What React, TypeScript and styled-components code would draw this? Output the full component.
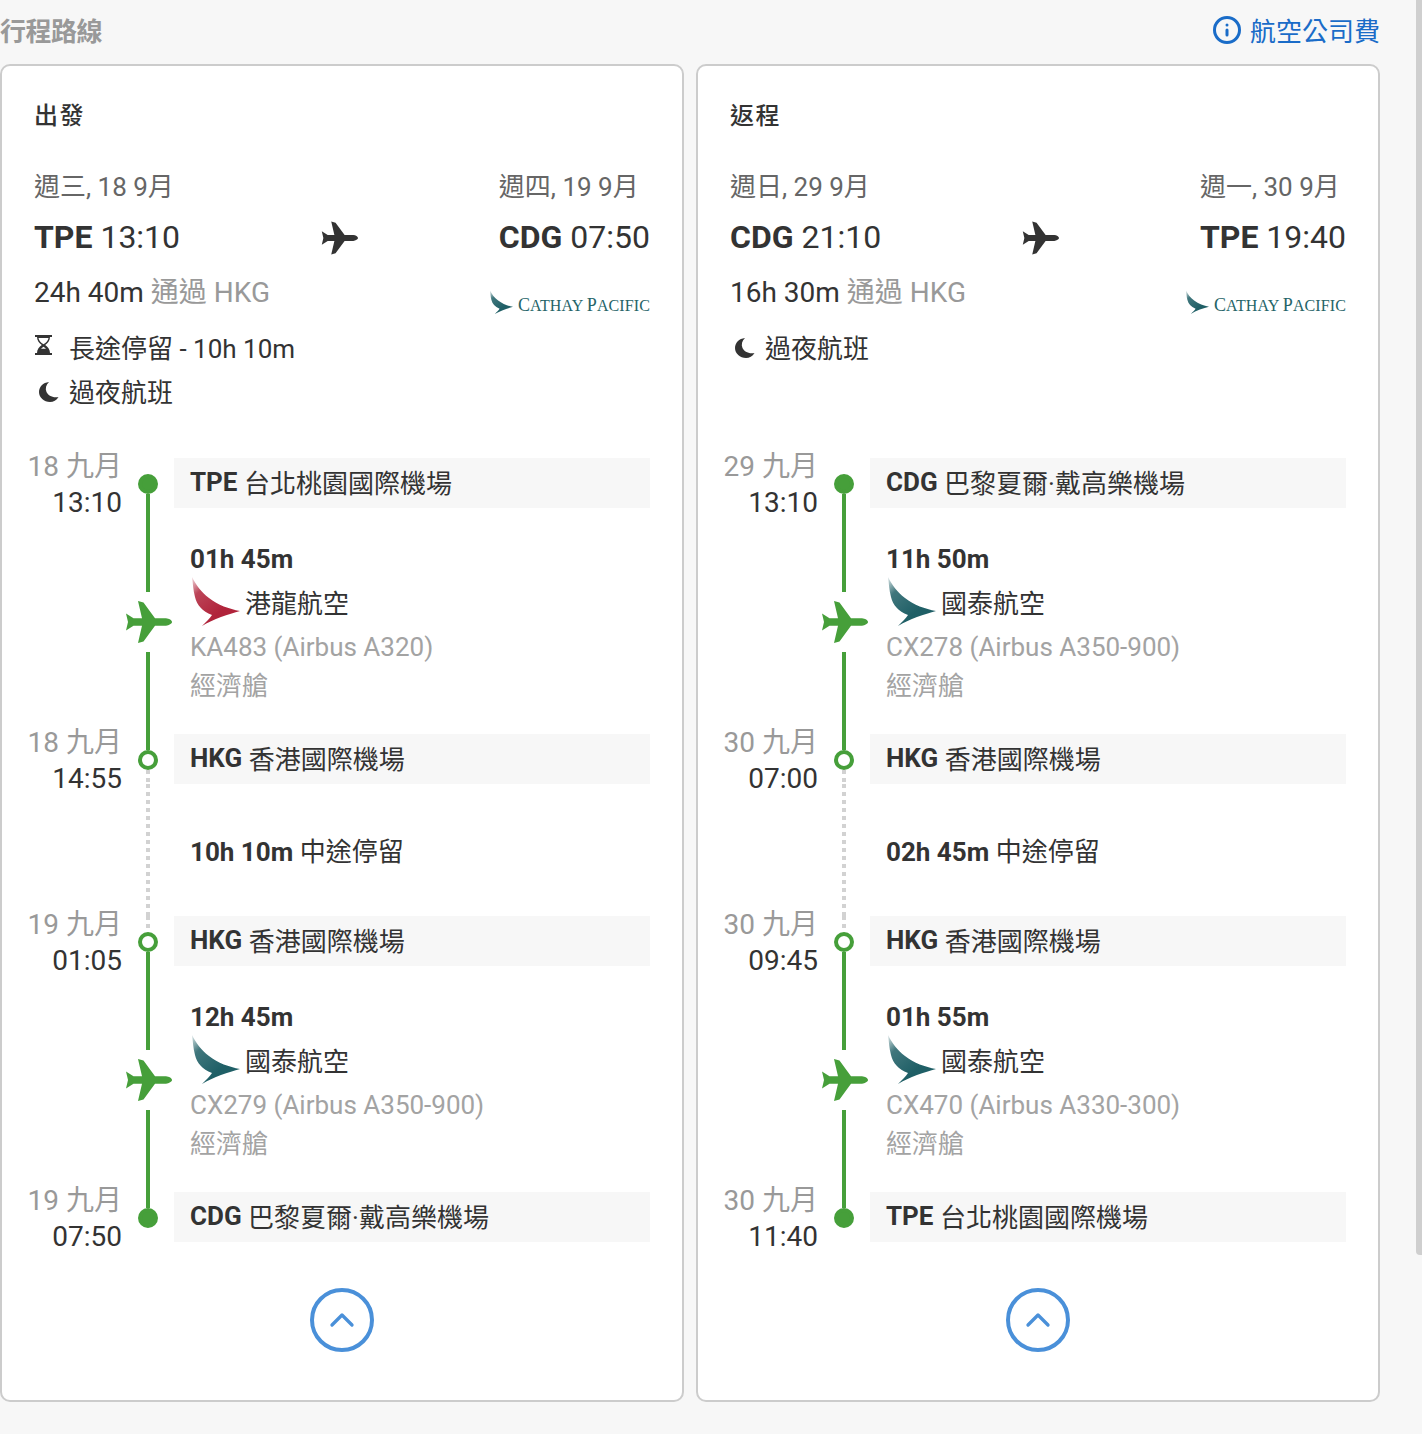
import React from "react";
import styled, { createGlobalStyle } from "styled-components";
import { Info, ChevronUp } from "lucide-react";

const GlobalStyle = createGlobalStyle`
  html, body {
    margin: 0;
    padding: 0;
    background: #f7f7f7;
  }
  body {
    font-family: Roboto, "Noto Sans CJK TC", sans-serif;
    color: #333;
  }
`;

const Page = styled.div`
  width: 1380px;
  height: 1434px;
`;

const ScrollThumb = styled.div`
  position: fixed;
  top: 0;
  right: 0;
  width: 6px;
  height: 1255px;
  background: #cfcfcf;
  border-bottom-left-radius: 4px;
`;

const TopBar = styled.div`
  height: 64px;
  display: flex;
  justify-content: space-between;
  align-items: center;
  padding-bottom: 6px;
  box-sizing: border-box;
`;

const SectionTitle = styled.div`
  font-size: 26px;
  font-weight: 700;
  letter-spacing: -0.5px;
  color: #999;
`;

const FeeLink = styled.a`
  display: flex;
  align-items: center;
  gap: 8px;
  font-size: 26px;
  color: #1a6cc8;
  svg {
    width: 30px;
    height: 30px;
    margin-top: 2px;
  }
`;

const Cards = styled.div`
  display: grid;
  grid-template-columns: 684px 684px;
  gap: 12px;
`;

const Card = styled.section`
  height: 1338px;
  box-sizing: border-box;
  background: #fff;
  border: 2px solid #ccc;
  border-radius: 10px;
  padding: 32px 32px 0;
`;

const CardTitle = styled.h2`
  margin: 0 0 34px;
  font-size: 24px;
  line-height: 36px;
  font-weight: 500;
  letter-spacing: 1.4px;
  color: #333;
`;

const RouteRow = styled.div`
  display: flex;
  justify-content: space-between;
`;

const DateLabel = styled.div`
  font-size: 26px;
  line-height: 38px;
  color: #666;
`;

const TimeLabel = styled.div`
  font-size: 32px;
  line-height: 42px;
  margin-top: 10px;
  color: #333;
  b {
    font-weight: 700;
  }
`;

const PlaneHolder = styled.div`
  align-self: flex-end;
  display: flex;
  color: #333;
  margin-bottom: 3px;
  svg {
    width: 37px;
    height: 34px;
  }
`;

const DurationRow = styled.div`
  display: flex;
  justify-content: space-between;
  align-items: center;
  margin-top: 13px;
  height: 44px;
`;

const Duration = styled.div`
  font-size: 28px;
  line-height: 44px;
  color: #333;
  span {
    color: #999;
  }
`;

const CarrierLogo = styled.div`
  display: flex;
  align-items: flex-end;
  gap: 5px;
  margin-top: 18px;
  svg {
    width: 23px;
    height: 25px;
  }
`;

const CarrierName = styled.span`
  font-family: "Liberation Serif", serif;
  font-size: 16px;
  line-height: 18px;
  letter-spacing: 0.1px;
  color: #256468;
  white-space: nowrap;
  i {
    font-style: normal;
    font-size: 18px;
  }
`;

const Notes = styled.div`
  height: 88px;
  margin-top: 9px;
  margin-bottom: 46px;
`;

const Note = styled.div`
  display: flex;
  align-items: center;
  height: 44px;
  font-size: 26px;
  color: #333;
`;

const NoteIcon = styled.span<{ $moon?: boolean }>`
  width: 35px;
  display: flex;
  justify-content: ${(p) => (p.$moon ? "center" : "flex-start")};
  padding-right: ${(p) => (p.$moon ? "6px" : "0")};
  padding-left: ${(p) => (p.$moon ? "0" : "1px")};
  margin-top: ${(p) => (p.$moon ? "3px" : "-2px")};
  box-sizing: border-box;
`;

const Timeline = styled.div`
  margin-left: -16px;
`;

const TimelineRow = styled.div<{ $height: number }>`
  display: grid;
  grid-template-columns: 104px 52px 1fr;
  grid-template-rows: ${(p) => p.$height}px;
`;

const TimeCol = styled.div`
  margin-top: -9px;
  text-align: right;
`;

const StopDate = styled.div`
  font-size: 28px;
  line-height: 36px;
  color: #999;
`;

const StopTime = styled.div`
  font-size: 28px;
  line-height: 36px;
  color: #333;
`;

const LineCol = styled.div`
  display: flex;
  flex-direction: column;
  align-items: center;
  color: #469f3a;
`;

const Segment = styled.div<{ $kind: "solid" | "dotted" | "none"; $height?: number }>`
  width: 4px;
  flex: ${(p) => (p.$height ? `0 0 ${p.$height}px` : "1")};
  background: ${(p) =>
    p.$kind === "solid"
      ? "#469f3a"
      : p.$kind === "dotted"
      ? "repeating-linear-gradient(#d2d2d2 0 4px, transparent 4px 8px)"
      : "transparent"};
`;

const Dot = styled.div<{ $hollow?: boolean }>`
  flex: 0 0 20px;
  width: 20px;
  box-sizing: border-box;
  border-radius: 50%;
  border: 4px solid #469f3a;
  background: ${(p) => (p.$hollow ? "#fff" : "#469f3a")};
`;

const PlaneSlot = styled.div`
  flex: 0 0 60px;
  display: flex;
  align-items: center;
  justify-content: center;
  svg {
    width: 47px;
    height: 42px;
  }
`;

const StopBar = styled.div`
  background: #f7f7f7;
  padding-left: 16px;
  font-size: 26px;
  line-height: 50px;
  color: #333;
  b {
    font-weight: 700;
    position: relative;
    top: -1px;
  }
  span {
    position: relative;
    top: 1px;
  }
`;

const LegInfo = styled.div`
  padding: 32px 0 0 16px;
`;

const LegDuration = styled.div`
  font-size: 26px;
  line-height: 38px;
  font-weight: 700;
  color: #333;
`;

const AirlineRow = styled.div`
  display: flex;
  align-items: center;
  height: 51px;
  box-sizing: border-box;
  padding-bottom: 5px;
  font-size: 26px;
  color: #333;
  gap: 7px;
  svg {
    width: 48px;
    height: 50px;
    margin-top: 1px;
    margin-left: 2px;
    margin-right: -2px;
  }
`;

const FlightLine = styled.div`
  font-size: 26px;
  line-height: 36px;
  margin-bottom: 2px;
  color: #a3a3a3;
`;

const CabinLine = styled.div`
  font-size: 26px;
  line-height: 38px;
  color: #a3a3a3;
`;

const LayoverInfo = styled.div`
  padding-left: 16px;
  font-size: 26px;
  line-height: 136px;
  color: #333;
  b {
    font-weight: 700;
  }
`;

const CollapseRow = styled.div`
  display: flex;
  justify-content: center;
  margin-top: 46px;
`;

const CollapseButton = styled.button`
  width: 64px;
  height: 64px;
  padding: 0;
  box-sizing: border-box;
  display: flex;
  align-items: center;
  justify-content: center;
  background: #fff;
  border: 4px solid #4a90d9;
  border-radius: 50%;
  color: #4a90d9;
  svg {
    width: 40px;
    height: 40px;
  }
`;

const PlaneIcon = () => (
  <svg viewBox="0 0 47 42" fill="currentColor">
    <path d="M47 21c0 1.700-3 3.400-6 3.700H30L18.500 40.500 13 42l4-17.300H8.500L1 29.500 3 21 1 12.500l7.500 4.800H17L13 0l5.500 1.500 11.500 15.800h11c3 .3 6 2 6 3.700Z" />
  </svg>
);

const BirdIcon = ({ color, id }: { color: string; id: string }) => (
  <svg viewBox="0 0 48 50">
    <defs>
      <linearGradient id={id} x1="0" y1="0" x2="0.6" y2="0.7">
        <stop offset="0" stopColor={color} stopOpacity="0.15" />
        <stop offset="0.35" stopColor={color} stopOpacity="0.85" />
        <stop offset="1" stopColor={color} />
      </linearGradient>
    </defs>
    <path
      d="M0 0C4 8 9 15 17 21C26 28 37 32 48 34C37 37 21 42 10 49C14 45 18 41 20 38C10 34 5 28 3 20C1 13 1 6 0 0Z"
      fill={`url(#${id})`}
    />
  </svg>
);

const HourglassIcon = () => (
  <svg viewBox="0 0 17 20" width="17" height="20" fill="#333">
    <path d="M0 0h17v2H0zM0 18h17v2H0z" />
    <path
      fillRule="evenodd"
      d="M2 2h13c0 3.500-2.300 6.200-4.800 8C12.700 11.800 15 14.500 15 18H2c0-3.500 2.300-6.200 4.800-8C4.300 8.200 2 5.500 2 2Zm1.500 1c.3 2.500 2.300 4.700 5 6.300 2.700-1.600 4.700-3.800 5-6.300h-10Zm5 8.700c-.9.600-1.800 1.300-2.500 2.100h5c-.7-.8-1.600-1.500-2.500-2.100Z"
    />
  </svg>
);

const MoonIcon = () => (
  <svg viewBox="0 0 20 20" width="20" height="20" fill="#333">
    <path d="M10 0C7 3 6 6.500 7.500 10c1.600 3.600 6 6 12 5-2 3.200-5 5-8.500 5C5 20 0 15.500 0 10 0 5 4 .6 10 0Z" />
  </svg>
);

type Stop = { date: string; time: string; code: string; name: string };
type Leg = { duration: string; airline: string; red?: boolean; flight: string };
type Trip = {
  title: string;
  fromDate: string;
  fromCode: string;
  fromTime: string;
  toDate: string;
  toCode: string;
  toTime: string;
  total: string;
  notes: string[];
  stops: Stop[];
  legs: Leg[];
  layover: string;
};

const trips: Trip[] = [
  {
    title: "出發",
    fromDate: "週三, 18 9月",
    fromCode: "TPE",
    fromTime: "13:10",
    toDate: "週四, 19 9月",
    toCode: "CDG",
    toTime: "07:50",
    total: "24h 40m",
    notes: ["長途停留 - 10h 10m", "過夜航班"],
    stops: [
      { date: "18 九月", time: "13:10", code: "TPE", name: "台北桃園國際機場" },
      { date: "18 九月", time: "14:55", code: "HKG", name: "香港國際機場" },
      { date: "19 九月", time: "01:05", code: "HKG", name: "香港國際機場" },
      { date: "19 九月", time: "07:50", code: "CDG", name: "巴黎夏爾·戴高樂機場" },
    ],
    legs: [
      { duration: "01h 45m", airline: "港龍航空", red: true, flight: "KA483 (Airbus A320)" },
      { duration: "12h 45m", airline: "國泰航空", flight: "CX279 (Airbus A350-900)" },
    ],
    layover: "10h 10m",
  },
  {
    title: "返程",
    fromDate: "週日, 29 9月",
    fromCode: "CDG",
    fromTime: "21:10",
    toDate: "週一, 30 9月",
    toCode: "TPE",
    toTime: "19:40",
    total: "16h 30m",
    notes: ["過夜航班"],
    stops: [
      { date: "29 九月", time: "13:10", code: "CDG", name: "巴黎夏爾·戴高樂機場" },
      { date: "30 九月", time: "07:00", code: "HKG", name: "香港國際機場" },
      { date: "30 九月", time: "09:45", code: "HKG", name: "香港國際機場" },
      { date: "30 九月", time: "11:40", code: "TPE", name: "台北桃園國際機場" },
    ],
    legs: [
      { duration: "11h 50m", airline: "國泰航空", flight: "CX278 (Airbus A350-900)" },
      { duration: "01h 55m", airline: "國泰航空", flight: "CX470 (Airbus A330-300)" },
    ],
    layover: "02h 45m",
  },
];

const StopRow = ({
  stop,
  above,
  below,
  hollow,
}: {
  stop: Stop;
  above: "solid" | "dotted" | "none";
  below: "solid" | "dotted" | "none";
  hollow?: boolean;
}) => (
  <TimelineRow $height={50}>
    <TimeCol>
      <StopDate>{stop.date}</StopDate>
      <StopTime>{stop.time}</StopTime>
    </TimeCol>
    <LineCol>
      <Segment $kind={above} $height={16} />
      <Dot $hollow={hollow} />
      <Segment $kind={below} />
    </LineCol>
    <StopBar>
      <b>{stop.code}</b> <span>{stop.name}</span>
    </StopBar>
  </TimelineRow>
);

const LegRow = ({ leg, id }: { leg: Leg; id: string }) => (
  <TimelineRow $height={226}>
    <div />
    <LineCol>
      <Segment $kind="solid" $height={84} />
      <PlaneSlot>
        <PlaneIcon />
      </PlaneSlot>
      <Segment $kind="solid" />
    </LineCol>
    <LegInfo>
      <LegDuration>{leg.duration}</LegDuration>
      <AirlineRow>
        <BirdIcon id={id} color={leg.red ? "#b0233a" : "#1f5f66"} />
        {leg.airline}
      </AirlineRow>
      <FlightLine>{leg.flight}</FlightLine>
      <CabinLine>經濟艙</CabinLine>
    </LegInfo>
  </TimelineRow>
);

const TripCard = ({ trip, index }: { trip: Trip; index: number }) => (
  <Card>
    <CardTitle>{trip.title}</CardTitle>
    <RouteRow>
      <div>
        <DateLabel>{trip.fromDate}</DateLabel>
        <TimeLabel>
          <b>{trip.fromCode}</b> {trip.fromTime}
        </TimeLabel>
      </div>
      <PlaneHolder>
        <PlaneIcon />
      </PlaneHolder>
      <div>
        <DateLabel>{trip.toDate}</DateLabel>
        <TimeLabel>
          <b>{trip.toCode}</b> {trip.toTime}
        </TimeLabel>
      </div>
    </RouteRow>
    <DurationRow>
      <Duration>
        {trip.total} <span>通過 HKG</span>
      </Duration>
      <CarrierLogo>
        <BirdIcon id={`logo-${index}`} color="#1f5f66" />
        <CarrierName>
          <i>C</i>ATHAY <i>P</i>ACIFIC
        </CarrierName>
      </CarrierLogo>
    </DurationRow>
    <Notes>
      {trip.notes.map((note) => {
        const overnight = note === "過夜航班";
        return (
          <Note key={note}>
            <NoteIcon $moon={overnight}>{overnight ? <MoonIcon /> : <HourglassIcon />}</NoteIcon>
            {note}
          </Note>
        );
      })}
    </Notes>
    <Timeline>
      <StopRow stop={trip.stops[0]} above="none" below="solid" />
      <LegRow leg={trip.legs[0]} id={`bird-${index}-0`} />
      <StopRow stop={trip.stops[1]} above="solid" below="dotted" hollow />
      <TimelineRow $height={132}>
        <div />
        <LineCol>
          <Segment $kind="dotted" />
        </LineCol>
        <LayoverInfo>
          <b>{trip.layover}</b> 中途停留
        </LayoverInfo>
      </TimelineRow>
      <StopRow stop={trip.stops[2]} above="dotted" below="solid" hollow />
      <LegRow leg={trip.legs[1]} id={`bird-${index}-1`} />
      <StopRow stop={trip.stops[3]} above="solid" below="none" />
    </Timeline>
    <CollapseRow>
      <CollapseButton aria-label="收起">
        <ChevronUp strokeWidth={2} />
      </CollapseButton>
    </CollapseRow>
  </Card>
);

export default function App() {
  return (
    <>
      <GlobalStyle />
      <ScrollThumb />
      <Page>
        <TopBar>
          <SectionTitle>行程路線</SectionTitle>
          <FeeLink>
            <Info strokeWidth={2.4} />
            航空公司費
          </FeeLink>
        </TopBar>
        <Cards>
          {trips.map((trip, i) => (
            <TripCard key={trip.title} trip={trip} index={i} />
          ))}
        </Cards>
      </Page>
    </>
  );
}
